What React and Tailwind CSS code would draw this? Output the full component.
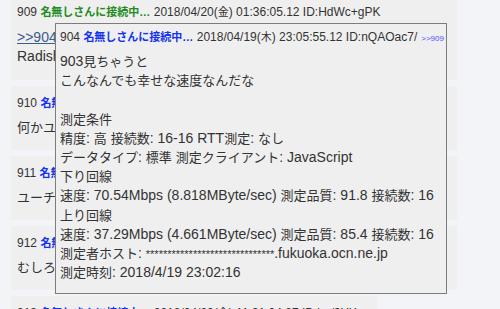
import React from "react";

const posts = [
  { no: 910, body: "何かユーザーエージェントで振り分けてるのかな", date: "2018/04/20(金) 01:40:12.33", id: "ID:k2Jm9xQa" },
  { no: 911, body: "ユーチューブは普通に見れる", date: "2018/04/20(金) 02:12:41.09", id: "ID:Pq8vLw0e" },
  { no: 912, body: "むしろ夜の方が速い", date: "2018/04/20(金) 08:55:20.61", id: "ID:Tz3rNc5u" },
];

const lines = [
  "903見ちゃうと",
  "こんなんでも幸せな速度なんだな",
  "",
  "測定条件",
  "精度: 高 接続数: 16-16 RTT測定: なし",
  "データタイプ: 標準 測定クライアント: JavaScript",
  "下り回線",
  "速度: 70.54Mbps (8.818MByte/sec) 測定品質: 91.8 接続数: 16",
  "上り回線",
  "速度: 37.29Mbps (4.661MByte/sec) 測定品質: 85.4 接続数: 16",
  "測定者ホスト: ",
  "測定時刻: 2018/4/19 23:02:16",
];

// Japanese runs render a touch smaller than the latin text, like the original font did
const Mixed = ({ text, cjk }) =>
  text.split(/([\u2026\u3000-\u9fff\uff00-\uffef]+)/).map((s, i) =>
    i % 2 ? <span key={i} className={cjk}>{s}</span> : s
  );

const Header = ({ no, date, id, green }) => (
  <div className="text-[12px] leading-[16px] whitespace-nowrap text-[#333]">
    {no}{" "}
    <span className={`font-bold text-[11px] ${green ? "text-[#228b22]" : "text-[#1432f0]"}`}>名無しさんに接続中…</span>{" "}
    <Mixed text={date} cjk="text-[11px]" /> {id}
  </div>
);

export default function App() {
  return (
    <div
      className="relative w-[500px] h-[309px] overflow-hidden bg-[#f3f4f8] text-[#333]"
      style={{ fontFamily: '"Liberation Sans", "Noto Sans CJK JP", sans-serif' }}
    >
      <div className="flex flex-col items-start gap-[6px] pl-[11px]">
        {/* 909 */}
        <div className="-mt-[5px] w-[446px] bg-[#efefef] px-[6px] pt-[9px] pb-[14px]">
          <Header no={909} date="2018/04/20(金) 01:36:05.12" id="ID:HdWc+gPK" green />
          <div className="mt-[8px] text-[14px] leading-[19px]">
            <span className="underline text-[#3b5b8c]">&gt;&gt;904</span>
          </div>
          <div className="text-[14px] leading-[19px] whitespace-nowrap">
            <Mixed text="Radish で測ってみたらこんなもん" cjk="text-[13px]" />
          </div>
        </div>

        {posts.map((p) => (
          <div key={p.no} className="w-[446px] bg-[#efefef] px-[6px] pt-[9px] pb-[12px]">
            <Header no={p.no} date={p.date} id={p.id} />
            <div className="mt-[7px] text-[13px] leading-[20px] whitespace-nowrap">{p.body}</div>
          </div>
        ))}

        {/* 913 */}
        <div className="w-[366px] bg-[#efefef] px-[6px] pt-[9px] pb-[12px]">
          <Header no={913} date="2018/04/20(金) 11:31:04.87" id="ID:ba/3YXsc" />
        </div>
      </div>

      {/* popup */}
      <div className="absolute left-[55px] top-[23px] w-[392px] h-[271px] bg-[#efefef] border border-[#7c7c7c] pl-[4px] pt-[5px]">
        <div className="flex items-baseline gap-[4px] whitespace-nowrap">
          <Header no={904} date="2018/04/19(木) 23:05:55.12" id="ID:nQAOac7/" />
          <span className="text-[8px] text-[#5050ff]">&gt;&gt;909</span>
        </div>
        <div className="mt-[7px] text-[14px] leading-[19.2px] whitespace-nowrap">
          {lines.map((l, i) => (
            <div key={i} className="h-[19.2px]">
              <Mixed text={l} cjk="text-[13px]" />
              {i === 10 && (
                <>
                  <span className="text-[11px]">******************************</span>.fukuoka.ocn.ne.jp
                </>
              )}
            </div>
          ))}
        </div>
      </div>
    </div>
  );
}
